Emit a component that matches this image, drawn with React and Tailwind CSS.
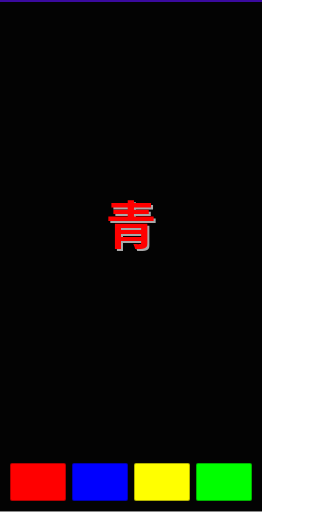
export default function App() {
  const colors = ['bg-[#ff0000]', 'bg-[#0000ff]', 'bg-[#ffff00]', 'bg-[#00ff00]'];

  return (
    <div className="flex h-[512px] w-[262px] flex-col border-t-2 border-b border-t-[#3a0a9e] border-b-[#8a8a8a] bg-[#030303]">
      <div className="flex flex-1 items-center justify-center pb-[20px]">
        <span
          className="text-[51px] font-bold leading-none text-[#ff0000] [text-shadow:2px_2px_0_#a8a8a8]"
          style={{ fontFamily: '"Noto Sans CJK SC", "Noto Sans CJK JP", sans-serif' }}
        >
          青
        </span>
      </div>
      <div className="flex gap-[6px] px-[10px] pb-[10px]">
        {colors.map((c) => (
          <div key={c} className={`h-[38px] flex-1 rounded-[2px] border border-black/30 ${c}`} />
        ))}
      </div>
    </div>
  );
}
